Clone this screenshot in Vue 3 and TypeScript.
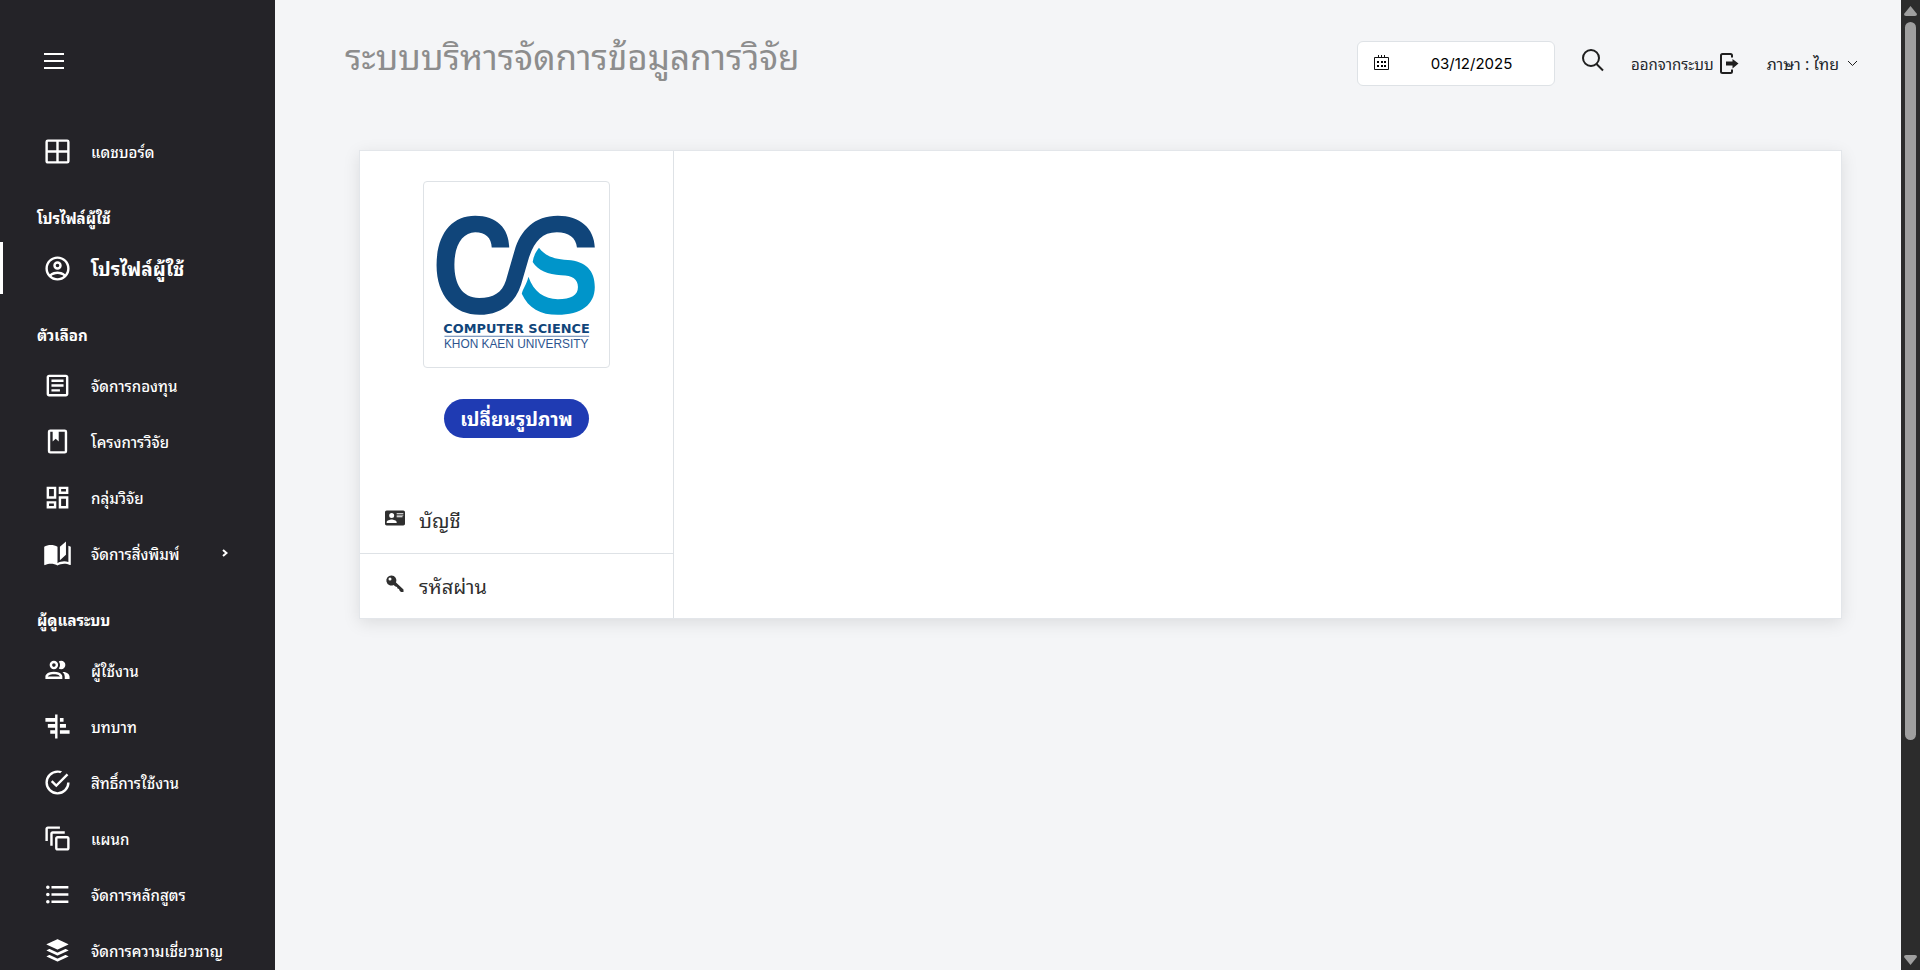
<script setup lang="ts">
import { ref } from 'vue'

interface NavItem {
  label: string
  icon: string
  active?: boolean
  children?: boolean
}

interface NavGroup {
  title?: string
  items: NavItem[]
}

const groups: NavGroup[] = [
  {
    items: [
      {
        label: 'แดชบอร์ด',
        icon: 'M4,2H20A2,2 0 0,1 22,4V20A2,2 0 0,1 20,22H4C2.92,22 2,21.1 2,20V4A2,2 0 0,1 4,2M4,4V11H11V4H4M4,20H11V13H4V20M20,20V13H13V20H20M20,4H13V11H20V4Z',
      },
    ],
  },
  {
    title: 'โปรไฟล์ผู้ใช้',
    items: [
      {
        label: 'โปรไฟล์ผู้ใช้',
        active: true,
        icon: 'M12,2A10,10 0 0,0 2,12A10,10 0 0,0 12,22A10,10 0 0,0 22,12A10,10 0 0,0 12,2M7.07,18.28C7.5,17.38 10.12,16.5 12,16.5C13.88,16.5 16.5,17.38 16.93,18.28C15.57,19.36 13.86,20 12,20C10.14,20 8.43,19.36 7.07,18.28M18.36,16.83C16.93,15.09 13.46,14.5 12,14.5C10.54,14.5 7.07,15.09 5.64,16.83C4.62,15.5 4,13.82 4,12C4,7.59 7.59,4 12,4C16.41,4 20,7.59 20,12C20,13.82 19.38,15.5 18.36,16.83M12,6C10.06,6 8.5,7.56 8.5,9.5C8.5,11.44 10.06,13 12,13C13.94,13 15.5,11.44 15.5,9.5C15.5,7.56 13.94,6 12,6M12,11A1.5,1.5 0 0,1 10.5,9.5A1.5,1.5 0 0,1 12,8A1.5,1.5 0 0,1 13.5,9.5A1.5,1.5 0 0,1 12,11Z',
      },
    ],
  },
  {
    title: 'ตัวเลือก',
    items: [
      {
        label: 'จัดการกองทุน',
        icon: 'M5,3C3.89,3 3,3.89 3,5V19C3,20.11 3.89,21 5,21H19C20.11,21 21,20.11 21,19V5C21,3.89 20.11,3 19,3H5M5,5H19V19H5V5M7,7V9H17V7H7M7,11V13H17V11H7M7,15V17H14V15H7Z',
      },
      {
        label: 'โครงการวิจัย',
        icon: 'M18,2A2,2 0 0,1 20,4V20A2,2 0 0,1 18,22H6A2,2 0 0,1 4,20V4A2,2 0 0,1 6,2H18M18,4H13V12L10.5,9.75L8,12V4H6V20H18V4Z',
      },
      {
        label: 'กลุ่มวิจัย',
        icon: 'M19,5V7H15V5H19M9,5V11H5V5H9M19,13V19H15V13H19M9,17V19H5V17H9M21,3H13V9H21V3M11,3H3V13H11V3M21,11H13V21H21V11M11,15H3V21H11V15Z',
      },
      {
        label: 'จัดการสิ่งพิมพ์',
        children: true,
        icon: 'M19 2L14 6.5V17.5L19 13V2M6.5 5C4.55 5 2.45 5.4 1 6.5V21.16C1 21.41 1.25 21.66 1.5 21.66C1.6 21.66 1.65 21.59 1.75 21.59C3.1 20.94 5.05 20.5 6.5 20.5C8.45 20.5 10.55 20.9 12 22C13.35 21.15 15.8 20.5 17.5 20.5C19.15 20.5 20.85 20.81 22.25 21.56C22.35 21.61 22.4 21.59 22.5 21.59C22.75 21.59 23 21.34 23 21.09V6.5C22.4 6.05 21.75 5.75 21 5.5V19C19.9 18.65 18.7 18.5 17.5 18.5C15.8 18.5 13.35 19.15 12 20V6.5C10.55 5.4 8.45 5 6.5 5Z',
      },
    ],
  },
  {
    title: 'ผู้ดูแลระบบ',
    items: [
      {
        label: 'ผู้ใช้งาน',
        icon: 'M13.07 10.41A5 5 0 0 0 13.07 4.59A3.39 3.39 0 0 1 15 4A3.5 3.5 0 0 1 15 11A3.39 3.39 0 0 1 13.07 10.41M5.5 7.5A3.5 3.5 0 1 1 9 11A3.5 3.5 0 0 1 5.5 7.5M7.5 7.5A1.5 1.5 0 1 0 9 6A1.5 1.5 0 0 0 7.5 7.5M16 17V19H2V17S2 13 9 13 16 17 16 17M14 17C13.86 16.22 12.67 15 9 15S4.07 16.31 4 17M15.95 13A5.32 5.32 0 0 1 18 17V19H22V17S22 13.37 15.94 13Z',
      },
      {
        label: 'บทบาท',
        icon: 'M2,5H10V2H12V22H10V18H6V15H10V13H4V10H10V8H2V5M14,5H17V8H14V5M14,10H19V13H14V10M14,15H22V18H14V15Z',
      },
      {
        label: 'สิทธิ์การใช้งาน',
        icon: 'M20,12A8,8 0 0,1 12,20A8,8 0 0,1 4,12A8,8 0 0,1 12,4C12.76,4 13.5,4.11 14.2,4.31L15.77,2.74C14.61,2.26 13.34,2 12,2A10,10 0 0,0 2,12A10,10 0 0,0 12,22A10,10 0 0,0 22,12M7.91,10.08L6.5,11.5L11,16L21,6L19.59,4.58L11,13.17L7.91,10.08Z',
      },
      {
        label: 'แผนก',
        icon: 'M4,2C2.89,2 2,2.89 2,4V14H4V4H14V2H4M8,6C6.89,6 6,6.89 6,8V18H8V8H18V6H8M12,10C10.89,10 10,10.89 10,12V20C10,21.11 10.89,22 12,22H20C21.11,22 22,21.11 22,20V12C22,10.89 21.11,10 20,10H12M12,12H20V20H12V12Z',
      },
      {
        label: 'จัดการหลักสูตร',
        icon: 'M7,5H21V7H7V5M7,13V11H21V13H7M4,4.5A1.5,1.5 0 0,1 5.5,6A1.5,1.5 0 0,1 4,7.5A1.5,1.5 0 0,1 2.5,6A1.5,1.5 0 0,1 4,4.5M4,10.5A1.5,1.5 0 0,1 5.5,12A1.5,1.5 0 0,1 4,13.5A1.5,1.5 0 0,1 2.5,12A1.5,1.5 0 0,1 4,10.5M7,19V17H21V19H7M4,16.5A1.5,1.5 0 0,1 5.5,18A1.5,1.5 0 0,1 4,19.5A1.5,1.5 0 0,1 2.5,18A1.5,1.5 0 0,1 4,16.5Z',
      },
      {
        label: 'จัดการความเชี่ยวชาญ',
        icon: 'M12.6,2.86C15.27,4.1 18,5.39 20.66,6.63C20.81,6.7 21,6.75 21,6.95C21,7.15 20.81,7.19 20.66,7.26C18,8.5 15.3,9.77 12.62,11C12.21,11.21 11.79,11.21 11.38,11C8.69,9.76 6,8.5 3.32,7.25C3.18,7.19 3,7.14 3,6.94C3,6.76 3.18,6.71 3.31,6.65C6,5.39 8.74,4.1 11.44,2.85C11.73,2.72 12.3,2.73 12.6,2.86M12,21.15C11.8,21.15 11.66,21.07 11.38,20.97C8.69,19.73 6,18.47 3.33,17.22C3.19,17.15 3,17.11 3,16.9C3,16.7 3.19,16.66 3.34,16.59C3.78,16.38 4.23,16.17 4.67,15.96C5.12,15.76 5.56,15.76 6,15.97C7.79,16.8 9.57,17.63 11.35,18.46C11.79,18.67 12.23,18.66 12.67,18.46C14.45,17.62 16.23,16.79 18,15.96C18.44,15.76 18.87,15.75 19.29,15.95C19.77,16.16 20.24,16.39 20.71,16.61C20.78,16.64 20.85,16.68 20.91,16.73C21.04,16.83 21.04,17 20.91,17.08C20.83,17.14 20.74,17.19 20.65,17.23C18,18.5 15.33,19.72 12.66,20.95C12.46,21.05 12.19,21.15 12,21.15M12,16.17C11.9,16.17 11.55,16.07 11.36,16C8.68,14.74 6,13.5 3.34,12.24C3.2,12.18 3,12.13 3,11.93C3,11.72 3.2,11.68 3.35,11.61C3.8,11.39 4.25,11.18 4.7,10.97C5.13,10.78 5.56,10.78 6,11C7.78,11.82 9.58,12.66 11.38,13.5C11.79,13.69 12.21,13.69 12.63,13.5C14.43,12.65 16.23,11.81 18.04,10.97C18.45,10.78 18.87,10.78 19.29,10.97C19.76,11.19 20.24,11.41 20.71,11.63C20.77,11.66 20.84,11.69 20.9,11.74C21.04,11.85 21.04,12 20.89,12.12C20.84,12.16 20.77,12.19 20.71,12.22C18,13.5 15.31,14.75 12.61,16C12.42,16.09 12.08,16.17 12,16.17Z',
      },
    ],
  },
]

const date = ref('03/12/2025')
</script>

<template>
  <div class="shell">
    <nav class="sidebar">
      <button class="toggle" type="button" aria-label="เมนู">
        <svg width="20" height="16" viewBox="0 0 20 16"><path d="M0 1H20M0 8H20M0 15H20" /></svg>
      </button>
      <section v-for="(group, g) in groups" :key="g">
        <h2 v-if="group.title" class="group-title">{{ group.title }}</h2>
        <a
          v-for="item in group.items"
          :key="item.label"
          href="#"
          class="nav-item"
          :class="{ active: item.active }"
        >
          <svg class="nav-icon" viewBox="0 0 24 24"><path :d="item.icon" /></svg>
          <span class="nav-label">{{ item.label }}</span>
          <svg v-if="item.children" class="nav-arrow" width="6" height="8" viewBox="0 0 6 8">
            <path d="M1 1L4.500 4L1 7" />
          </svg>
        </a>
      </section>
    </nav>

    <div class="page">
      <header class="topbar">
        <h1>ระบบบริหารจัดการข้อมูลการวิจัย</h1>
        <div class="tools">
          <label class="date">
            <svg width="15" height="16" viewBox="0 0 15 16">
              <path class="line" d="M0.500 2.500H14.500V14.500H0.500ZM4.500 0V3M7.500 0V3M10.500 0V3" />
              <path d="M3 6h2v2H3zM7 6h2v2H7zM10 6h2v2H10zM3 10h2v2H3zM7 10h2v2H7zM10 10h2v2H10z" />
            </svg>
            <input v-model="date" type="text" aria-label="วันที่" />
          </label>
          <button class="search" type="button" aria-label="ค้นหา">
            <svg width="24" height="24" viewBox="0 0 24 24">
              <circle cx="10" cy="10" r="8" />
              <path d="M15.500 16L22 22.500" />
            </svg>
          </button>
          <a class="logout" href="#">
            <span>ออกจากระบบ</span>
            <svg width="19" height="21" viewBox="0 0 19 21">
              <path class="door" d="M12 4.500V2.500Q12 1 10.500 1H2.500Q1 1 1 2.500V18.500Q1 20 2.500 20H10.500Q12 20 12 18.500V16.500" />
              <path d="M6 8.500H12.500V6L18.500 10.500L12.500 15.500V12.500H6Z" />
            </svg>
          </a>
          <button class="language" type="button">
            <span>ภาษา : ไทย</span>
            <svg width="11" height="7" viewBox="0 0 11 7"><path d="M1 1L5.500 5.500L10 1" /></svg>
          </button>
        </div>
      </header>

      <main class="card">
        <aside class="profile">
          <svg class="logo" viewBox="0 0 560 560" role="img" aria-label="Computer Science, Khon Kaen University">
            <path
              fill="#10457a"
              d="M258 198C257 140 220 102 155 102C82 102 38 160 38 252C38 345 92 402 168 402C232 402 275 368 294 310L318 228C334 180 358 152 402 152C438 152 460 168 463 198H517C515 140 472 102 405 102C335 102 292 145 274 208L248 298C236 335 210 351 167 351C115 351 92 310 92 250C92 190 118 152 155 152C186 152 204 168 205 198Z"
            />
            <path
              fill="#0095ca"
              d="M348 199C368 225 392 233 435 236C490 240 517 268 517 318C517 372 475 402 405 402C352 402 316 382 296 338C300 322 311 310 316 287C332 333 365 355 405 355C445 355 466 343 466 318C466 294 450 282 415 282C375 280 345 268 329 242C331 226 338 212 348 199Z"
            />
            <text class="logo-name" x="280" y="456">COMPUTER SCIENCE</text>
            <path stroke="#5c7fae" stroke-width="3" d="M62 467H500" />
            <text class="logo-school" x="279" y="503">KHON KAEN UNIVERSITY</text>
          </svg>
          <button class="change" type="button">เปลี่ยนรูปภาพ</button>
          <div class="tabs">
            <a href="#" class="tab">
              <svg width="20" height="20" viewBox="0 0 24 24">
                <path d="M22,3H2C0.910,3.040 0.040,3.910 0,5V19C0.040,20.090 0.910,20.960 2,21H22C23.090,20.960 23.960,20.090 24,19V5C23.960,3.910 23.090,3.040 22,3M14,6H22V7H14V6M14,8H22V9H14V8M14,10H21V11H14V10M8,6A3,3 0 0,1 11,9A3,3 0 0,1 8,12A3,3 0 0,1 5,9A3,3 0 0,1 8,6M14,18H2V17C2,15 6,13.900 8,13.900C10,13.900 14,15 14,17V18Z" />
              </svg>
              <span>บัญชี</span>
            </a>
            <a href="#" class="tab">
              <svg width="20" height="20" viewBox="0 0 20 20">
                <path fill-rule="evenodd" d="M6.500 1.500A5 5 0 1 0 8.500 11L10.500 12.500L12 13L12.500 14.500L14 15L14.500 16.500L16 18H18.500V15.500L11 8.500A5 5 0 0 0 6.500 1.500ZM5 3.500A1.500 1.500 0 1 1 5 6.500A1.500 1.500 0 0 1 5 3.500Z" />
              </svg>
              <span>รหัสผ่าน</span>
            </a>
          </div>
        </aside>
        <section class="detail"></section>
      </main>
    </div>

    <div class="scrollbar">
      <svg width="13" height="10" viewBox="0 0 13 10"><path d="M6.500 0L13 8Q13 10 11 10H2Q0 10 0 8Z" /></svg>
      <div class="track"><div class="thumb"></div></div>
      <svg width="13" height="10" viewBox="0 0 13 10"><path d="M6.500 10L0 2Q0 0 2 0H11Q13 0 13 2Z" /></svg>
    </div>
  </div>
</template>

<style>
body {
  margin: 0;
  overflow: hidden;
}
</style>

<style scoped>
.shell {
  display: flex;
  height: 100vh;
  overflow: hidden;
  background: #f4f5f7;
  color: #212529;
  font-family: Tahoma, "Leelawadee UI", "Noto Sans Thai Looped", Loma, Waree, Garuda, "Noto Sans", sans-serif;
  font-size: 16px;
}

.shell * {
  box-sizing: border-box;
}

a {
  color: inherit;
  text-decoration: none;
}

button {
  margin: 0;
  padding: 0;
  border: 0;
  background: none;
  color: inherit;
  font: inherit;
}

h1,
h2 {
  margin: 0;
}

.sidebar {
  flex: 0 0 275px;
  overflow: hidden;
  background: #242328;
  color: #fff;
}

.toggle {
  display: block;
  height: 123px;
  padding: 0 44px 1px;
}

.toggle svg {
  display: block;
  fill: none;
  stroke: #fff;
  stroke-width: 2;
}

.group-title {
  height: 61px;
  padding: 10px 0 0 37px;
  font-size: 15px;
  font-weight: 700;
  line-height: 56px;
}

.nav-item {
  display: flex;
  align-items: center;
  height: 56px;
  padding-left: 43px;
  border-left: 0 solid #fff;
  font-size: 15px;
  font-weight: 500;
}

.nav-item.active {
  height: 52px;
  margin: 2px 0;
  padding-left: 40px;
  border-left-width: 3px;
  font-size: 19px;
  font-weight: 700;
}

.nav-icon {
  flex: none;
  width: 29px;
  height: 29px;
  margin-right: 19px;
  fill: #fff;
}

.nav-label {
  flex: 1;
}

.nav-item.active .nav-label {
  padding-bottom: 2px;
}

.nav-arrow {
  margin-right: 47px;
  fill: none;
  stroke: #fff;
  stroke-width: 2;
}

.page {
  flex: 1;
  min-width: 0;
}

.topbar {
  display: flex;
  justify-content: space-between;
  height: 150px;
  padding: 34px 43px 0 70px;
}

h1 {
  color: #8d8d8d;
  font-size: 35px;
  font-weight: 400;
  line-height: 40px;
}

.tools {
  display: flex;
  align-items: center;
  height: 58px;
}

.date {
  display: flex;
  align-items: center;
  width: 198px;
  height: 45px;
  padding-left: 16px;
  border: 1px solid #dee2e6;
  border-radius: 6px;
  background: #fff;
}

.date svg {
  flex: none;
}

.date .line {
  fill: none;
  stroke: #111;
}

.date input {
  flex: 1;
  min-width: 0;
  padding: 0;
  border: 0;
  background: none;
  color: #000;
  font: 400 15px Inter, sans-serif;
  text-align: center;
}

.search {
  margin-left: 26px;
  padding-bottom: 6px;
}

.search svg {
  display: block;
  fill: none;
  stroke: #1f1f1f;
  stroke-width: 2;
}

.logout {
  display: flex;
  align-items: center;
  gap: 6px;
  margin-left: 26px;
  font-size: 15px;
}

.logout svg {
  fill: #1f1f1f;
}

.logout .door {
  fill: none;
  stroke: #1f1f1f;
  stroke-width: 2;
}

.language {
  display: flex;
  align-items: center;
  gap: 8px;
  margin-left: 28px;
}

.language svg {
  fill: none;
  stroke: #1f1f1f;
}

.card {
  display: flex;
  margin: 0 59px 0 84px;
  border: 1px solid #e3e6ea;
  background: #fff;
  box-shadow: 0 4px 16px rgba(0, 0, 0, 0.1);
}

.profile {
  display: flex;
  flex: 0 0 314px;
  flex-direction: column;
  align-items: center;
  padding-top: 30px;
  border-right: 1px solid #dee2e6;
}

.detail {
  flex: 1;
}

.logo {
  width: 187px;
  height: 187px;
  border: 1px solid #dee2e6;
  border-radius: 4px;
}

.logo-name {
  fill: #10457a;
  font: 700 39px "DejaVu Sans", sans-serif;
  text-anchor: middle;
}

.logo-school {
  fill: #2d5590;
  font: 400 36px "Liberation Sans", sans-serif;
  text-anchor: middle;
}

.change {
  height: 39px;
  margin-top: 31px;
  padding: 0 16px 2px;
  border-radius: 20px;
  background: #1f3bb3;
  color: #fff;
  font-size: 19px;
  font-weight: 700;
}

.tabs {
  align-self: stretch;
  margin-top: 49px;
}

.tab {
  display: flex;
  align-items: center;
  gap: 14px;
  height: 66px;
  padding: 0 0 2px 25px;
  color: #2f2f2f;
  font-size: 20px;
}

.tab + .tab {
  height: 65px;
  border-top: 1px solid #dee2e6;
}

.tab svg {
  margin-bottom: 3px;
  fill: #2f2f2f;
}

.scrollbar {
  display: flex;
  flex: 0 0 19px;
  flex-direction: column;
  align-items: center;
  padding: 6px 0 5px;
  background: #2c2c2c;
}

.scrollbar svg {
  flex: none;
  fill: #9f9f9f;
}

.track {
  flex: 1;
  width: 11px;
  padding-top: 6px;
}

.thumb {
  height: 77%;
  border-radius: 6px;
  background: #9f9f9f;
}
</style>
